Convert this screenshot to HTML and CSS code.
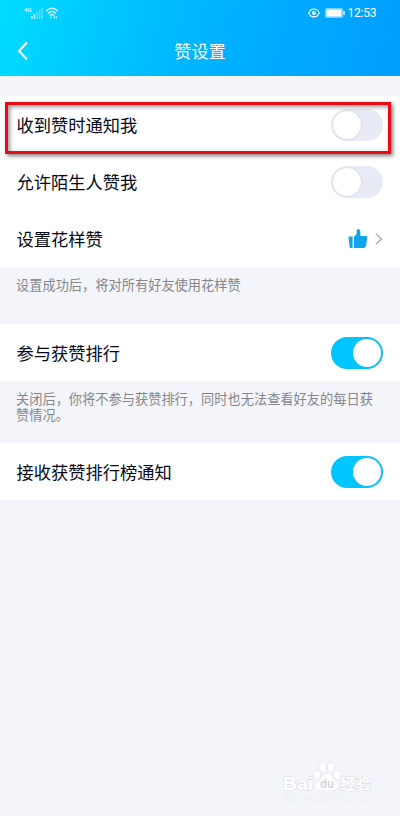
FILE: index.html
```html
<!DOCTYPE html>
<html lang="zh-CN">
<head>
    <meta charset="UTF-8">
    <meta name="viewport" content="width=device-width, initial-scale=1.0">
    <title>赞设置</title>
    <link rel="stylesheet" href="styles.css">
</head>
<body>
    <header class="header">
        <div class="status-bar">
            <div class="status-left">
                <span class="network">4G</span>
                <svg class="signal" width="12" height="11" viewBox="0 0 12 11" fill="#fff">
                    <rect x="0" y="8" width="1.6" height="3"/>
                    <rect x="2.6" y="6" width="1.6" height="5" opacity="0.8"/>
                    <rect x="5.2" y="4" width="1.6" height="7" opacity="0.4"/>
                    <rect x="7.8" y="2" width="1.6" height="9" opacity="0.4"/>
                    <rect x="10.4" y="0" width="1.6" height="11" opacity="0.4"/>
                </svg>
                <svg class="wifi" width="14" height="12" viewBox="0 0 14 12" fill="none" stroke="#fff" stroke-width="1.4">
                    <path d="M1 4.2Q7-1.6 13 4.2"/>
                    <path d="M2.9 6.5Q7 2.4 11.1 6.5"/>
                    <path d="M4.7 8.6Q7 6.3 9.3 8.6"/>
                    <circle cx="6.2" cy="10.5" r="0.9" fill="#fff" stroke="none"/>
                    <path d="M9.5 9v2.6M11.3 9v2.6" stroke-width="0.9"/>
                </svg>
            </div>
            <div class="status-right">
                <svg width="12" height="10" viewBox="0 0 12 10" fill="none" stroke="#fff" stroke-width="1.1">
                    <path d="M0.7 5C3-0.4 9-0.4 11.3 5C9 10.2 3 10.2 0.7 5Z"/>
                    <circle cx="6" cy="5" r="2" fill="#fff" stroke="none"/>
                    <circle cx="6.6" cy="4.3" r="0.6" fill="#0aa8ff" stroke="none"/>
                </svg>
                <svg class="battery" width="20" height="10" viewBox="0 0 20 10">
                    <rect x="0.4" y="0.4" width="17.2" height="9.2" rx="1" fill="#fff" fill-opacity="0.35" stroke="#fff" stroke-opacity="0.5" stroke-width="0.8"/>
                    <rect x="1.5" y="1.5" width="15" height="7" fill="#fff"/>
                    <rect x="18.4" y="3" width="1.3" height="4" fill="#fff"/>
                </svg>
                <span class="time">12:53</span>
            </div>
        </div>
        <div class="nav">
            <svg class="back" width="12" height="20" viewBox="0 0 12 20" fill="none" stroke="#fff" stroke-width="2">
                <path d="M10 1.5L2 10l8 8.5"/>
            </svg>
            <h1 class="title">赞设置</h1>
        </div>
    </header>

    <main>
        <section class="group">
            <div class="row highlighted">
                <span>收到赞时通知我</span>
                <span class="switch"></span>
            </div>
            <div class="row">
                <span>允许陌生人赞我</span>
                <span class="switch"></span>
            </div>
            <div class="row">
                <span>设置花样赞</span>
                <span class="link">
                    <svg width="20" height="20" viewBox="0 0 20 20" fill="#0ba6ec">
                        <path d="M1.2 7.6H4.6V19H2.7Q1.7 19 1.6 18L0.6 8.6Q0.5 7.6 1.2 7.6Z"/>
                        <path d="M6 7.8Q8.7 6.6 8.7 3.8V1.6Q8.7 0 10.2 0Q12.3 0 12.3 2.8V6.9H17.8Q19.6 6.9 19.3 8.7L17.9 17.2Q17.6 19 15.8 19H6Z"/>
                    </svg>
                    <svg class="arrow" width="8" height="12" viewBox="0 0 8 12" fill="none" stroke="#a9adb8" stroke-width="1.4">
                        <path d="M1 1l5.5 5L1 11"/>
                    </svg>
                </span>
            </div>
        </section>
        <p class="note">设置成功后，将对所有好友使用花样赞</p>

        <section class="group">
            <div class="row">
                <span>参与获赞排行</span>
                <span class="switch on"></span>
            </div>
        </section>
        <p class="note note-long">关闭后，你将不参与获赞排行，同时也无法查看好友的每日获赞情况。</p>

        <section class="group">
            <div class="row">
                <span>接收获赞排行榜通知</span>
                <span class="switch on"></span>
            </div>
        </section>
    </main>

    <div class="watermark">
        <svg width="96" height="44" viewBox="0 0 96 44">
            <g class="mark">
                <text x="0" y="28" font-size="19" textLength="30" lengthAdjust="spacingAndGlyphs">Bai</text>
                <ellipse cx="34" cy="13" rx="3" ry="4.2"/>
                <ellipse cx="40" cy="5.5" rx="3.2" ry="4.4"/>
                <ellipse cx="48" cy="5.5" rx="3.2" ry="4.4"/>
                <ellipse cx="54" cy="13" rx="3" ry="4.2"/>
                <path d="M44 12Q48 12 50.500 17Q56 20 55 25Q54 29 48 28.500H39Q33 29 32.500 25Q32 20 37.500 17Q40 12 44 12Z"/>
                <text class="cn" x="57.500" y="26.500" font-size="15" textLength="30" lengthAdjust="spacingAndGlyphs">经验</text>
            </g>
            <text class="du" x="37" y="26" font-size="12" textLength="14" lengthAdjust="spacingAndGlyphs">du</text>
            <text class="url" x="0" y="40" font-size="10" textLength="89" lengthAdjust="spacingAndGlyphs">jingyan.baidu.com</text>
        </svg>
    </div>
</body>
</html>
```
FILE: styles.css
```css
*,
*::before,
*::after {
    box-sizing: border-box;
}

body {
    margin: 0;
    min-height: 816px;
    position: relative;
    background: #f4f5fa;
    color: #03081a;
    font-family: "Noto Sans CJK SC", sans-serif;
}

.header {
    height: 76px;
    margin-bottom: 20px;
    background: linear-gradient(105deg, #00dcff 0%, #00b4ff 50%, #009dff 100%);
    color: #fff;
}

.status-bar {
    display: flex;
    justify-content: space-between;
    height: 26px;
    padding: 0 24px;
}

.status-left,
.status-right {
    display: flex;
    align-items: center;
}

.status-left {
    opacity: 0.8;
}

.network {
    align-self: flex-start;
    margin-top: 6px;
    font: bold 6px/7px Roboto, sans-serif;
    width: 7px;
}

.signal {
    margin-top: 1px;
}

.wifi {
    margin-left: 2px;
}

.battery {
    margin: 0 3px 0 5px;
}

.time {
    font: 12px/26px Roboto, sans-serif;
    width: 28.5px;
    white-space: nowrap;
    letter-spacing: -0.2px;
}

.nav {
    display: grid;
    grid-template-columns: 40px 1fr 40px;
    align-items: center;
    height: 50px;
}

.back {
    margin-left: 17px;
}

.title {
    margin: 0;
    font-size: 17.2px;
    font-weight: 400;
    line-height: 50px;
    text-align: center;
}

.group {
    background: #fff;
}

.row {
    display: flex;
    align-items: center;
    justify-content: space-between;
    height: 57px;
    padding: 0 17px 0 16.5px;
    font-size: 17.25px;
    line-height: 26px;
    position: relative;
}

/* red frame around the first option */
.highlighted::after {
    content: "";
    position: absolute;
    top: 6px;
    left: 5px;
    right: 9px;
    height: 52px;
    border: 3px solid #e60c12;
    box-shadow: 2px 2px 4px rgba(0, 0, 0, 0.5), inset 2px 2px 4px rgba(0, 0, 0, 0.4);
    z-index: 1;
}

.switch {
    display: flex;
    align-items: center;
    width: 52px;
    height: 32px;
    padding: 0 2px;
    border-radius: 16px;
    background: #e8eaf5;
}

.switch::before {
    content: "";
    width: 28px;
    height: 28px;
    border-radius: 50%;
    background: #fff;
    box-shadow: 0 0 2px rgba(120, 125, 160, 0.3);
}

.switch.on {
    justify-content: flex-end;
    background: #00c5ff;
}

.link {
    display: flex;
    align-items: center;
}

.arrow {
    margin-left: 7px;
}

.note {
    height: 57px;
    margin: 0;
    padding: 10px 16px 0;
    color: #85868c;
    font-size: 13.22px;
    line-height: 15.5px;
}

.note-long {
    height: 62px;
}

.watermark {
    position: absolute;
    left: 283px;
    top: 762px;
}

.watermark text {
    font-family: "Liberation Sans", sans-serif;
    font-weight: bold;
}

.mark {
    fill: #fff;
    stroke: #d9dbe1;
    stroke-width: 1;
    paint-order: stroke;
}

.watermark .cn {
    font-family: "Noto Sans CJK SC", sans-serif;
}

.watermark .du {
    fill: #d3d5dc;
}

.watermark .url {
    fill: #fbfcfe;
    stroke: #e3e5eb;
    stroke-width: 0.6;
    paint-order: stroke;
    font-weight: normal;
}
```
